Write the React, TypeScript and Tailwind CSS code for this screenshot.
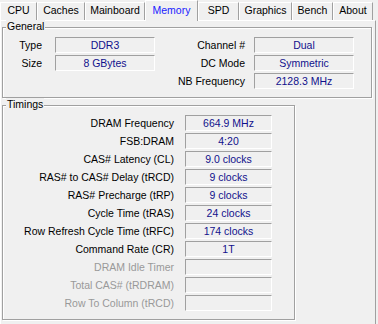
const tabs = [
  { name: "CPU", w: "w-[37px]" },
  { name: "Caches", w: "w-[48px]" },
  { name: "Mainboard", w: "w-[60px]" },
  { name: "Memory", w: "w-[53px]", active: true },
  { name: "SPD", w: "w-[41px]" },
  { name: "Graphics", w: "w-[53px]" },
  { name: "Bench", w: "w-[41px]" },
  { name: "About", w: "w-[40px]" },
];

const timings = [
  { label: "DRAM Frequency", value: "664.9 MHz" },
  { label: "FSB:DRAM", value: "4:20" },
  { label: "CAS# Latency (CL)", value: "9.0 clocks" },
  { label: "RAS# to CAS# Delay (tRCD)", value: "9 clocks" },
  { label: "RAS# Precharge (tRP)", value: "9 clocks" },
  { label: "Cycle Time (tRAS)", value: "24 clocks" },
  { label: "Row Refresh Cycle Time (tRFC)", value: "174 clocks" },
  { label: "Command Rate (CR)", value: "1T" },
  { label: "DRAM Idle Timer", value: "", disabled: true },
  { label: "Total CAS# (tRDRAM)", value: "", disabled: true },
  { label: "Row To Column (tRCD)", value: "", disabled: true },
];

function Box({ value, className }: { value: string; className: string }) {
  return (
    <div
      className={`h-[16px] flex items-center justify-center border border-t-[#a0a0a0] border-l-[#a0a0a0] border-b-white border-r-white text-[#10108c] ${className}`}
    >
      {value}
    </div>
  );
}

function Group({ title, className, children }: { title: string; className: string; children: React.ReactNode }) {
  return (
    <div className={`relative border border-[#a0a0a0] shadow-[inset_1px_1px_0_#fff,1px_1px_0_#fff] ${className}`}>
      <span className="absolute -top-[8px] left-[3px] bg-[#f0f0f0] px-[1px] leading-[13px]">{title}</span>
      {children}
    </div>
  );
}

export default function App() {
  return (
    <div className="w-[378px] h-[324px] overflow-hidden flex flex-col bg-[#f0f0f0] text-black text-[10.5px] leading-[13px] font-['Liberation_Sans',Arial,sans-serif]">
      {/* Tabs */}
      <div className="flex h-[20px] items-end shrink-0">
        {tabs.map((t) =>
          t.active ? (
            <div
              key={t.name}
              className={`${t.w} relative z-10 -mb-[1px] h-[21px] pb-[1px] flex items-center justify-center bg-[#f0f0f0] border-l border-t border-r border-l-white border-t-white border-r-[#a0a0a0] text-[#1a1aff]`}
            >
              {t.name}
            </div>
          ) : (
            <div
              key={t.name}
              className={`${t.w} h-[18px] pb-[2px] flex items-center justify-center border-l border-t border-r border-l-white border-t-white border-r-[#a0a0a0]`}
            >
              {t.name}
            </div>
          )
        )}
      </div>

      {/* Panel */}
      <div className="w-[376px] flex-1 border-l border-t border-r border-l-white border-t-white border-r-[#a0a0a0]">
        <Group title="General" className="ml-[1px] mt-[6px] w-[370px] h-[71px] pt-[9px]">
          <div className="flex">
            <div className="flex flex-col gap-[2px]">
              {[
                ["Type", "DDR3"],
                ["Size", "8 GBytes"],
              ].map(([l, v]) => (
                <div key={l} className="flex items-center">
                  <span className="w-[39px] text-right">{l}</span>
                  <Box value={v} className="ml-[13px] w-[100px]" />
                </div>
              ))}
            </div>
            <div className="flex flex-col gap-[2px]">
              {[
                ["Channel #", "Dual"],
                ["DC Mode", "Symmetric"],
                ["NB Frequency", "2128.3 MHz"],
              ].map(([l, v]) => (
                <div key={l} className="flex items-center">
                  <span className="w-[90px] text-right">{l}</span>
                  <Box value={v} className="ml-[9px] w-[100px]" />
                </div>
              ))}
            </div>
          </div>
        </Group>

        <Group title="Timings" className="ml-[1px] mt-[7px] w-[293px] h-[215px] pt-[9px]">
          <div className="flex flex-col gap-[2px]">
            {timings.map((r) => (
              <div key={r.label} className="flex items-center">
                <span className={`w-[171px] text-right whitespace-nowrap ${r.disabled ? "text-[#999999]" : ""}`}>
                  {r.label}
                </span>
                <Box value={r.value} className="ml-[11px] w-[87px]" />
              </div>
            ))}
          </div>
        </Group>
      </div>
    </div>
  );
}
